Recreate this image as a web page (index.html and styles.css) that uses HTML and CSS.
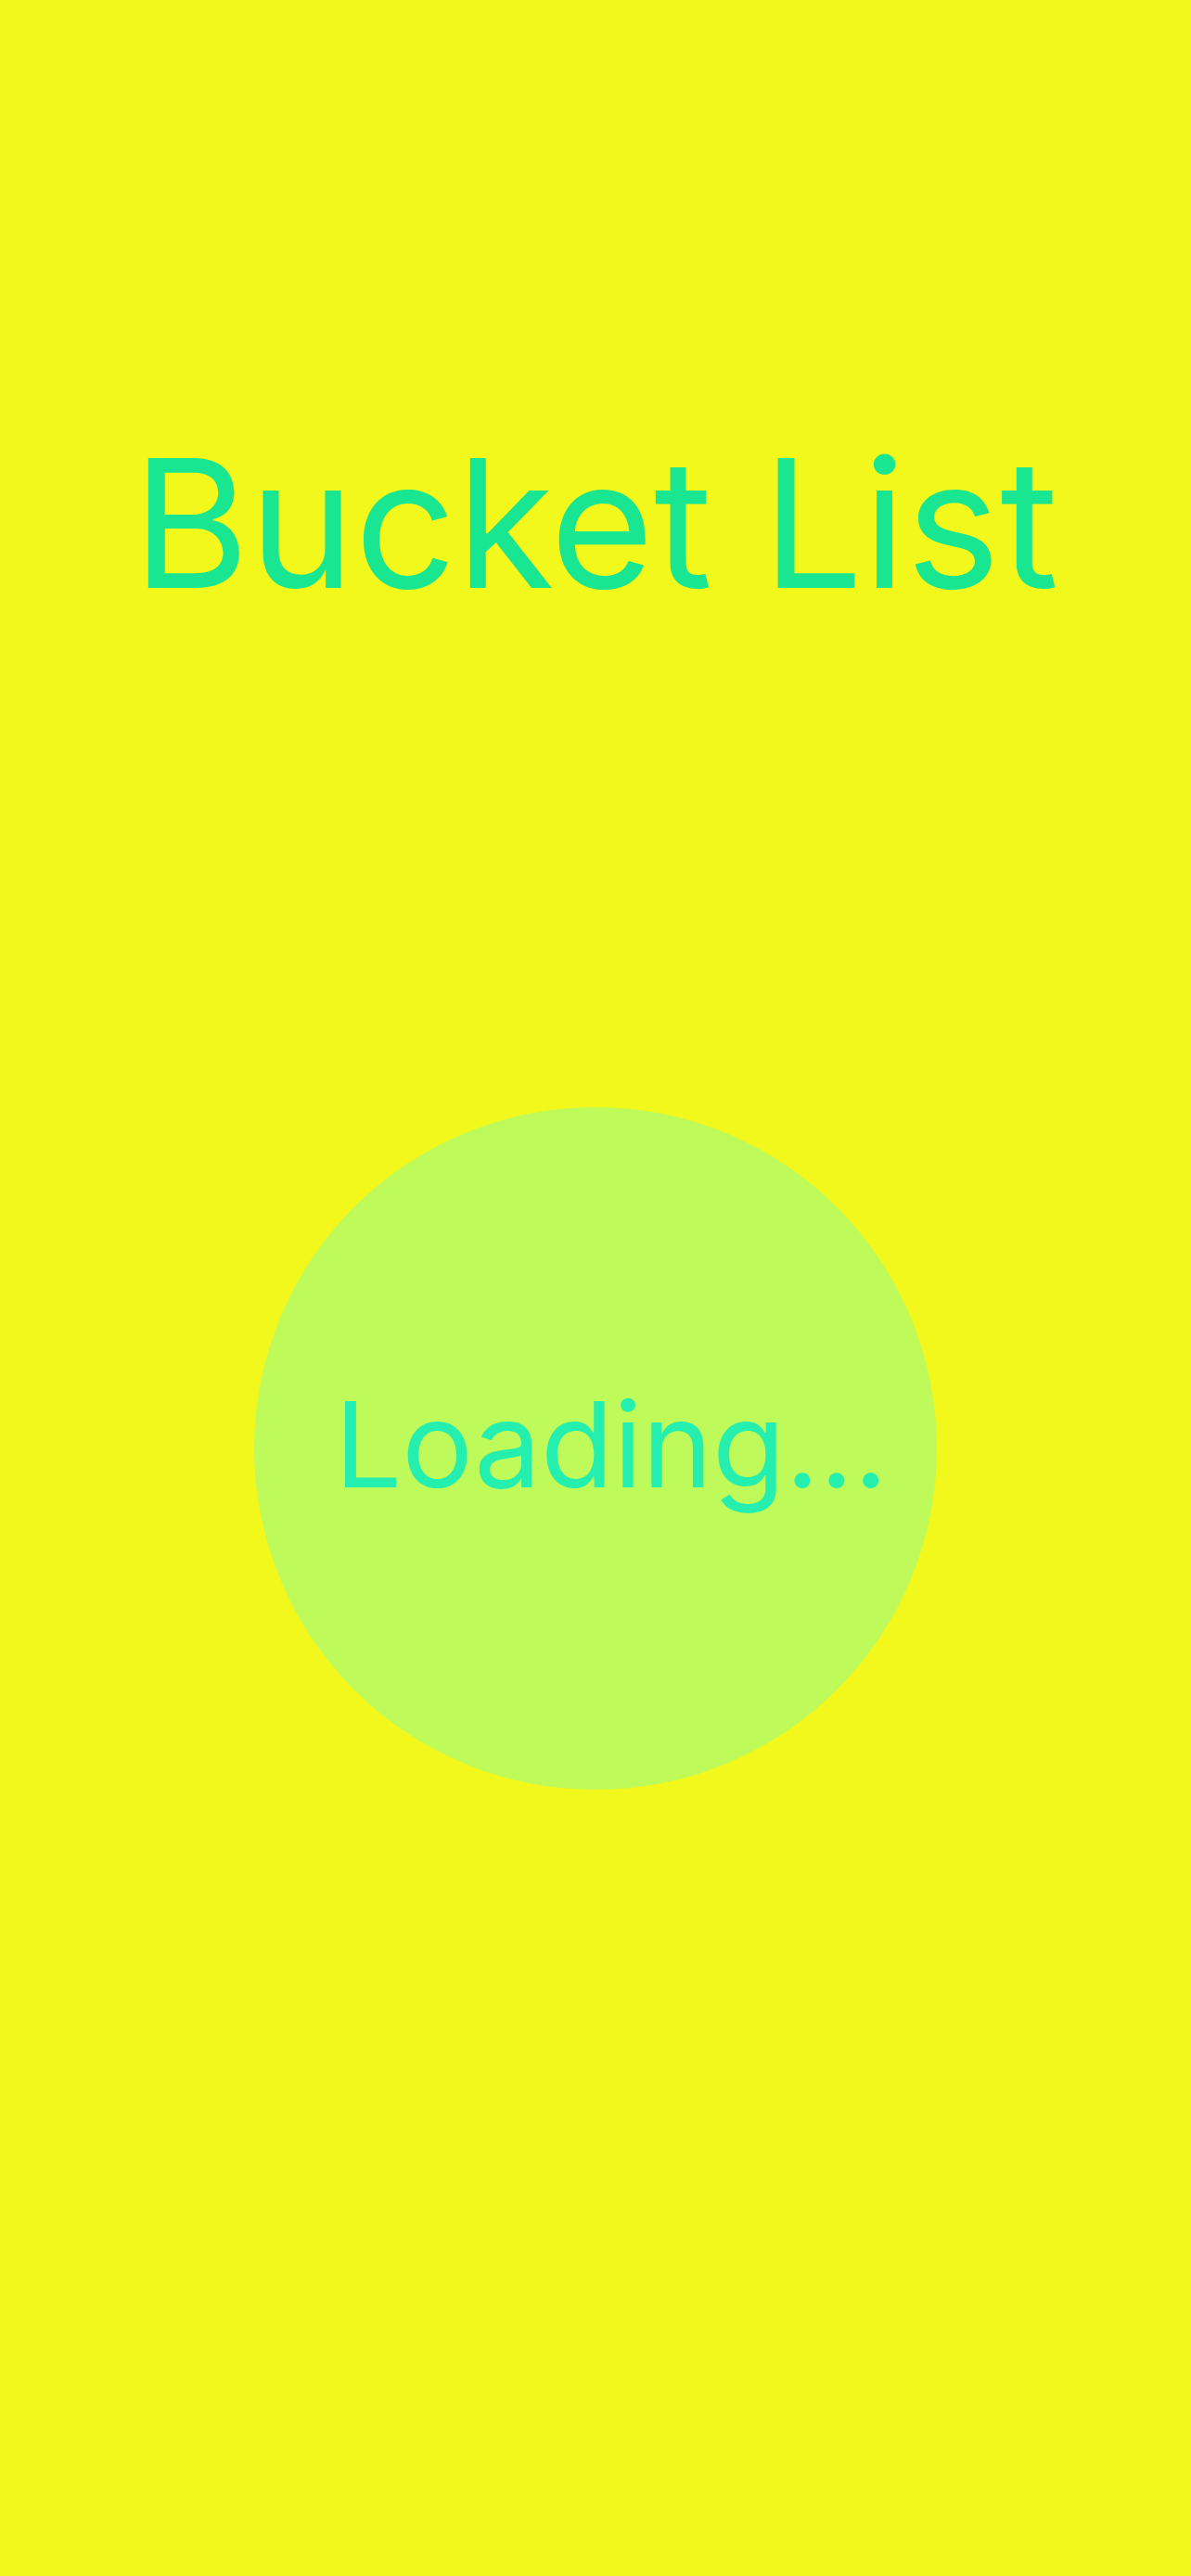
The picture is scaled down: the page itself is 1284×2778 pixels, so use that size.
FILE: index.html
```html
<!DOCTYPE html>
<html lang="en">
<head>
<meta charset="utf-8">
<title>Bucket List</title>
<link rel="stylesheet" href="styles.css">
</head>
<body>
<main class="screen">
  <h1 class="title">Bucket List</h1>
  <div class="loader">
    <span class="loader-text">Loading...</span>
  </div>
</main>
</body>
</html>
```

FILE: styles.css
```css
html, body {
  margin: 0;
  padding: 0;
}
body {
  background: #f2f81b;
  font-family: Inter, "Noto Sans", "Liberation Sans", sans-serif;
  width: 1284px;
  min-height: 2778px;
}
.screen {
  display: flex;
  flex-direction: column;
  align-items: center;
  padding-top: 468px;
}
.title {
  margin: 0;
  font-size: 192px;
  line-height: 192px;
  font-weight: 400;
  color: #18e690;
  white-space: nowrap;
}
.loader {
  margin-top: 534px;
  width: 736px;
  height: 736px;
  border-radius: 50%;
  background: #befa5a;
  display: flex;
  align-items: center;
  justify-content: center;
}
.loader-text {
  font-size: 128px;
  line-height: 128px;
  color: #24efae;
  padding-left: 34px;
  margin-top: -8px;
  white-space: nowrap;
}
```
